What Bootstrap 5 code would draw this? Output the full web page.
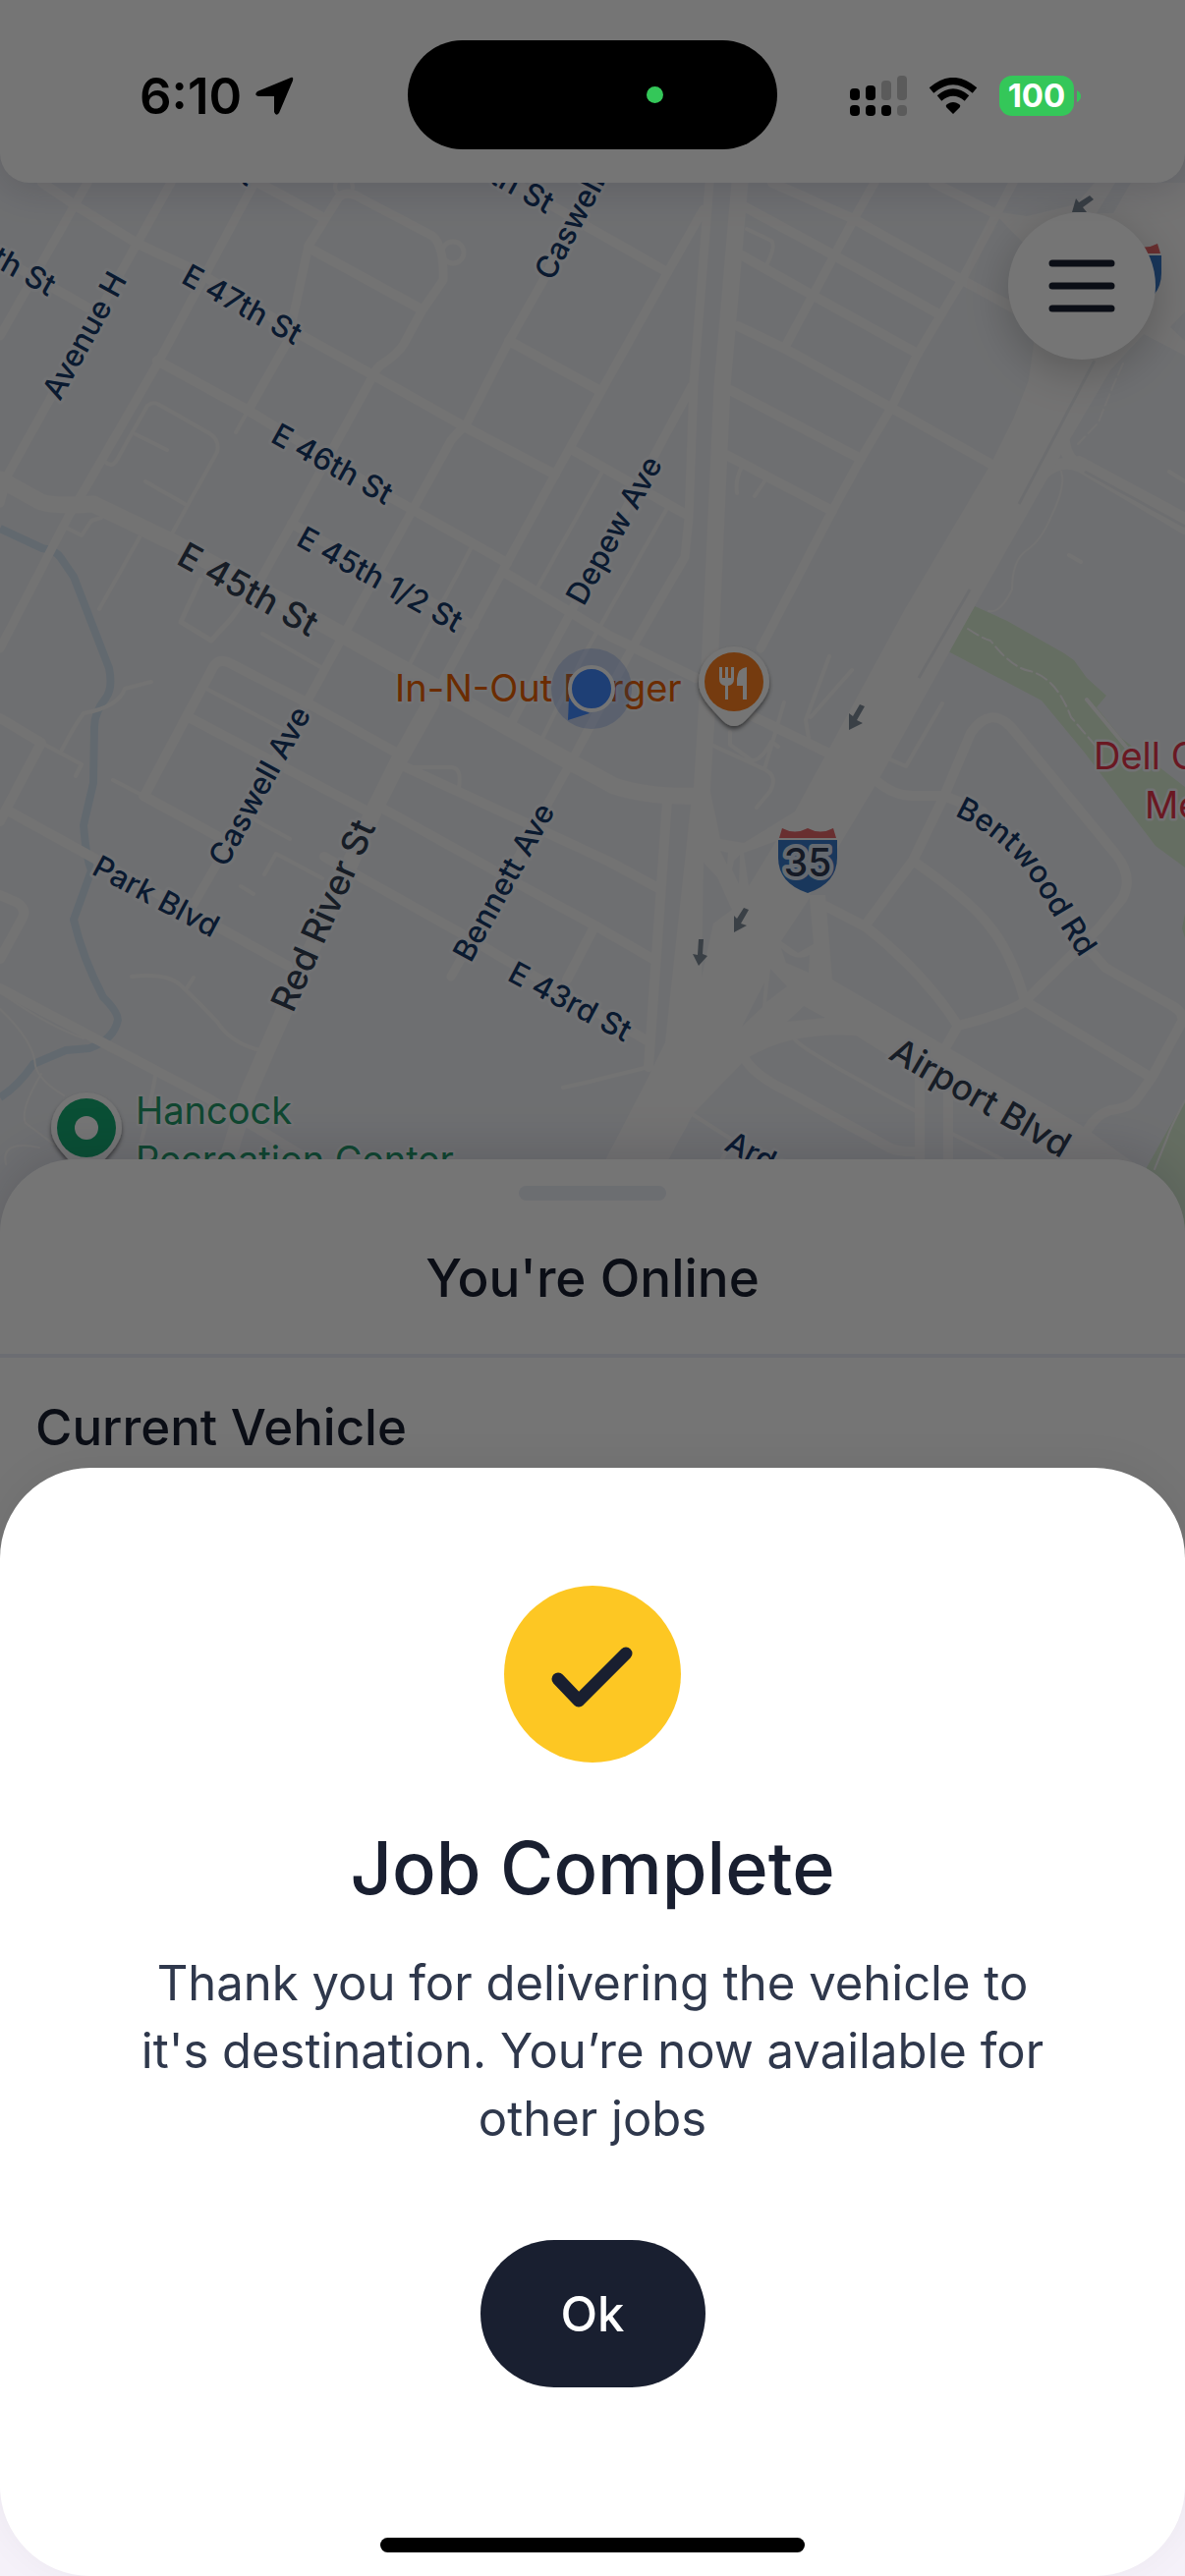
<!DOCTYPE html>
<html lang="en">
<head>
<meta charset="utf-8">
<meta name="viewport" content="width=device-width, initial-scale=1">
<title>Job Complete</title>
<link href="https://cdn.jsdelivr.net/npm/bootstrap@5.3.0/dist/css/bootstrap.min.css" rel="stylesheet">
<style>
  :root { --ink: #191f30; --slate: #2f384c; }
  body { font-family: Inter, "Liberation Sans", sans-serif; background: #f5f1f9; color: var(--ink); }
  .app-header { height: 186px; background: #fff; border-radius: 0 0 30px 30px; box-shadow: 0 6px 40px rgba(20, 20, 60, .16); }
  .status-row { grid-template-columns: minmax(0, 1fr) 376px minmax(0, 1fr); padding-top: 41px; color: #000; }
  .status-side { height: 111px; padding-top: 2px; }
  .status-left { padding-left: 142px; gap: 12px; }
  .status-right { padding-left: 74px; gap: 22px; }
  .clock { font-size: 51px; line-height: 62px; font-weight: 600; }
  .island { height: 111px; border-radius: 56px; background: #000; padding-right: 116px; }
  .cam-dot { width: 17px; height: 17px; background: #34c759; }
  .battery { width: 76px; height: 41px; border-radius: 13px; background: #34c759; color: #fff; font-size: 33px; line-height: 41px; font-weight: 700; }
  .map-area { margin-top: -30px; }
  .map-area > svg { height: 1094px; }
  .menu-btn { top: 60px; right: 30px; width: 150px; height: 150px; background: #fff; box-shadow: 0 12px 45px rgba(0, 0, 0, .22); }
  .scrim { background: rgba(0, 0, 0, .54); }
  .vehicle-sheet { margin-top: -70px; background: #fff; border-radius: 75px 75px 0 0; padding-bottom: 115px; box-shadow: 0 -6px 50px rgba(20, 20, 60, .16); }
  .sheet-top { padding: 27px 0 44px; border-bottom: 4px solid #ebeef8; }
  .grab-bar { width: 150px; height: 15px; background: #ebeff6; }
  .sheet-title { font-size: 53px; line-height: 66px; font-weight: 500; margin: 46px 0 0; }
  .sheet-label { font-size: 51px; line-height: 64px; font-weight: 500; margin: 39px 36px 0; }
  .job-dialog { margin-top: -106px; background: #fff; border-radius: 92px; padding: 120px 120px 24px; box-shadow: 0 -6px 40px rgba(0, 0, 0, .05); }
  .job-dialog h1 { font-size: 74px; line-height: 92px; font-weight: 500; margin: 61px 0 37px; }
  .job-dialog p { font-size: 49px; line-height: 69px; color: var(--slate); margin: 0 0 89px; }
  .tick-disc { width: 180px; height: 180px; padding-top: 8px; background: #fdc723; }
  .ok-btn { width: 229px; height: 150px; padding-top: 8px; background: var(--ink); color: #fff; font-size: 49px; font-weight: 500; }
  .ok-btn:hover { background: var(--ink); color: #fff; }
  .home-bar { width: 432px; height: 15px; background: #000; }
  .rd { fill: none; stroke: #fbfafa; stroke-linejoin: round; stroke-linecap: round; }
  .lbl { font-size: 31px; font-weight: 500; fill: #16396a; paint-order: stroke; stroke: #f7f9fc; stroke-width: 6px; stroke-linejoin: round; }
  .lbl-main { font-size: 36px; fill: #323f53; }
  .poi { font-size: 38px; font-weight: 400; paint-order: stroke; stroke: #f7f9fc; stroke-width: 5px; stroke-linejoin: round; }
</style>
</head>
<body>
<div class="d-flex flex-column min-vh-100 overflow-hidden">
  <div class="position-relative">
    <header class="app-header position-relative">
      <div class="status-row d-grid position-relative z-3">
        <div class="status-side status-left d-flex align-items-center">
          <span class="clock">6:10</span>
          <svg width="42" height="42" viewBox="0 0 42 42" aria-hidden="true"><path d="M38 2Q41 1 40 5L26 38Q23 42 21 37V21H5Q0 20 4 16Z"/></svg>
        </div>
        <div class="island d-flex align-items-center justify-content-end"><span class="cam-dot rounded-circle"></span></div>
        <div class="status-side status-right d-flex align-items-center">
          <svg width="58" height="42" viewBox="0 0 58 42" aria-hidden="true">
            <g><rect x="0" y="13" width="10" height="12" rx="4"/><rect x="16" y="10" width="10" height="15" rx="4"/><rect x="0" y="30" width="10" height="11" rx="4"/><rect x="16" y="30" width="10" height="11" rx="4"/><rect x="32" y="30" width="10" height="11" rx="4"/></g>
            <g fill="#5b5b5b"><rect x="32" y="5" width="10" height="20" rx="4"/><rect x="48" y="0" width="10" height="25" rx="4"/><rect x="48" y="30" width="10" height="11" rx="4"/></g>
          </svg>
          <svg width="50" height="38" viewBox="0 0 50 38" aria-hidden="true"><path d="M25 37L18 30Q17 28 19 27Q25 23 31 27Q33 28 32 30Z"/><path d="M11 21Q25 9 39 21M3 13Q25-6 47 13" fill="none" stroke="#000" stroke-width="7"/></svg>
          <span class="d-flex align-items-center">
            <span class="battery text-center">100</span>
            <svg width="8" height="14" viewBox="0 0 8 14" aria-hidden="true"><path d="M3 1Q7 3 7 7T3 13Z" fill="#34c759"/></svg>
          </span>
        </div>
      </div>
    </header>

    <main class="map-area position-relative z-n1">
      <svg class="w-100 d-block" viewBox="0 156 1206 1094" preserveAspectRatio="xMidYMid slice" role="img" aria-label="Map">
        <rect y="156" width="1206" height="1094" fill="#f0f2f6"/>
        <!-- parkland -->
        <g fill="#dcefd5"><path d="M992 617L1025 632L1083 665L1093 672L1106 690L1126 708L1116 720L1141 751L1206 801V883L1176 861L1103 765L1060 713L965 663Z"/><path d="M1206 1119L1166 1190L1180 1250H1206ZM1206 930L1203 945L1206 955Z"/></g>
        <!-- creek -->
        <path d="M0 538L43 558Q57 560 62 568L75 587L111 680Q115 700 108 710Q96 725 96 740L95 797L85 840Q88 875 93 886L75 936Q84 975 105 1015Q120 1030 120 1038Q116 1058 91 1067L67 1069L34 1083Q18 1106 0 1117" fill="none" stroke="#d6e5f2" stroke-width="8"/>
        <!-- footpaths and service roads -->
        <g class="rd" stroke-width="4">
          <path d="M107 470Q114 477 119 468L150 413Q156 408 162 412L213 441Q224 448 221 460L174 545M138 442L170 458M148 490L188 513M142 547L101 620M67 537L83 545L93 530L103 527M253 417L240 440"/>
          <path d="M267 645L328 680M210 701L293 745M257 833L295 854M245 902L258 910M269 890L281 869L328 894M134 994Q170 990 184 1003T221 1040Q235 1062 265 1069M190 1006L197 995M154 694L127 701Q120 720 85 726Q75 740 63 763M42 756L83 778L77 790M115 794L146 810M413 781H460Q470 782 467 801"/>
          <path d="M158 1095Q152 1130 144 1161M482 553L415 680M613 480L546 600M679 517L593 669L552 751M760 233L785 245Q790 250 780 270M755 475Q748 488 750 502M780 487L768 505"/>
          <path d="M724 758L778 783L798 715M743 745V758L765 774Q775 774 785 755L792 760M844 668L820 733L823 751M867 682L825 730M778 783Q792 790 784 805L770 822M904 772L922 780L959 716M1106 712L1150 765M1088 565L1100 572M1190 480L1206 490"/>
          <path d="M809 1058Q815 1068 932 1131M969 1154L1020 1180M706 1135L745 1160L730 1190M600 1101L660 1086M600 1101L573 1107"/>
          <path d="M0 1010Q50 1045 85 1057M0 1027Q35 1060 36 1085Q40 1100 65 1115M42 1093Q20 1130 26 1143L55 1165M6 1185Q0 1160 40 1168M1206 1120Q1190 1150 1188 1158L1175 1190M1080 480Q1085 495 1070 525Q1060 550 1045 560T1030 600Q1018 625 1006 622" stroke-width="2"/>
          <path d="M1143 370Q1125 410 1118 430L1097 452M985 640Q1000 650 1008 652Q1030 680 1048 683Q1075 690 1090 730L1120 765" stroke-width="2" stroke-dasharray="12 5"/>
        </g>
        <!-- residential streets, south-west to north-east -->
        <g class="rd" stroke-width="9">
          <path d="M0 342L89 186M0 512L8 483L174 186M0 660L71 523L81 507L162 367L259 186M253 417L293 347L314 250L344 202Q350 194 362 199L440 240Q452 250 451 285L429 317L411 350Q405 360 390 370Q383 374 380 382L326 480L297 533L265 590"/>
          <path d="M265 590L235 630L215 652L184 633L204 590" stroke-width="5"/>
          <circle cx="461" cy="257" r="11" stroke-width="5"/><circle cx="350" cy="190" r="9" stroke-width="4"/>
          <path d="M605 180L552 287L518 347L474 433Q460 445 457 452L421 517L346 653L312 715L221 879L196 922"/>
          <path d="M716 213L679 278L612 398L565 483L516 573L439 715M704 393L664 467L581 623L522 733M722 186L706 390L701 527L697 567L643 660L581 776L459 994"/>
          <path d="M890 186L869 223L799 353M1031 186L979 285L934 360L907 415L876 467L847 520L774 660"/>
        </g>
        <!-- residential streets, north-west to south-east -->
        <g class="rd" stroke-width="10">
          <path d="M43 186L75 208L140 248L198 275L308 342L380 382L474 435L565 483M0 262L89 313M160 367L253 418L399 507L516 573M514 583L620 647L708 690M263 186L326 220M314 252L429 315M518 347L611 398M581 457L697 523M530 190L600 232L679 277M297 533L482 637"/>
          <path d="M786 186L869 223L979 285L1040 318M950 186L1014 218M757 210L849 260L956 320M755 260L826 300L934 360M751 332L799 355L907 415L1008 472M743 397L876 467M739 463L847 520M766 729L844 767"/>
          <path d="M148 808L190 729L217 679Q222 670 232 674L312 715L405 767M190 729L376 827M146 810L221 851M411 780L620 877L670 904M388 822L530 901L609 944L666 977M330 872L471 951L518 979L660 1060M0 731L42 756L6 824L0 836M6 824L93 872L293 983M0 1006L214 1119L310 1178M0 911L18 919Q28 926 22 936L0 976M603 947L577 997M679 815L660 1086"/>
        </g>
        <!-- neighbourhood loop east of the highway -->
        <g class="rd" stroke-width="10">
          <path d="M892 795Q910 810 929 810H961L1000 826M882 940L929 876L961 810L988 746Q1008 718 1029 740L1136 870Q1154 893 1142 915L1118 945L1043 1019Q1030 1030 975 1044L963 1065M929 876Q985 915 1005 940Q1030 970 1043 1019L1172 1097L1203 1040Q1206 1030 1190 1022L1125 985L1103 960M1172 1097L1157 1118Q1150 1128 1130 1130Q1115 1135 1106 1151M840 922L882 944Q940 990 975 1044"/>
          <path d="M758 1078Q770 1096 800 1110L905 1168Q915 1173 936 1172M936 1095V1190M965 1110V1190"/>
          <path d="M1083 450Q1085 468 1100 475L1206 538M1062 482Q1080 466 1100 475" stroke-width="12"/>
          <path d="M1098 470L1206 528" stroke-width="12"/>
        </g>
        <path d="M1104 480L1206 536" stroke="#eef0f3" stroke-width="3"/>
        <!-- arterial roads -->
        <path class="rd" stroke-width="17" d="M0 488L40 510Q52 516 95 513L178 553L332 637L581 776L625 800Q660 812 714 810M439 715L407 772L380 826L289 1029L253 1111L225 1200M753 186L735 393L722 680L714 810"/>
        <!-- interstate, ramps and Airport Blvd -->
        <path fill="#fbfafa" d="M1114 186L1095 208L1045 220L1010 215L1041 247L1052 350L1047 387L1031 427L1008 473L921 620L809 826L757 858L733 854L722 801L704 811L677 1061L656 1104L617 1179L590 1250H650L681 1179L706 1133L758 1079Q800 1050 871 1054L929 1090L1075 1179L1120 1215H1190L1153 1183L1103 1147L847 997L840 911H824L894 794L992 617L1083 457L1130 377L1164 340L1206 362V186Z"/>
        <g fill="#f0f2f6">
          <path d="M1135 186H1151L1133 217H1116ZM1191 333L1206 317V347Z"/>
          <path d="M724 801Q750 805 766 822T780 844L757 856L733 852Z"/>
          <path d="M733 866L741 868L740 880ZM757 868L790 856L762 902ZM747 876L745 885L752 900L753 870ZM716 878L730 893L745 926L726 940L714 995Z"/>
          <path d="M824 914L828 961L812 970L795 958ZM795 965Q810 980 824 972L823 990L800 980ZM784 986L801 1004L780 1020ZM778 1000L776 1025L755 1045ZM818 1024L840 1036L801 1040Z"/>
        </g>
        <path d="M1114 367L1037 513M987 600L935 690" stroke="#eceef1" stroke-width="3"/>
        <!-- one-way arrows -->
        <g fill="#7e8b98">
          <path d="M875 717L880 719L872 733L878 736L864 743V726L868 729Z"/>
          <path d="M757 924L762 926L754 940L760 942L747 949V932L750 935Z"/>
          <path d="M711 956H716L715 971L720 973L711 983L705 971L710 972Z"/>
          <path d="M1109 199L1113 203L1102 211L1106 216H1091L1095 202L1098 206Z"/>
        </g>
        <!-- street names -->
        <g class="lbl">
          <text transform="translate(183 287) rotate(29)">E 47th St</text>
          <text transform="translate(274 449) rotate(29)">E 46th St</text>
          <text transform="translate(300 554) rotate(29)">E 45th 1/2 St</text>
          <text transform="translate(515 997) rotate(28)">E 43rd St</text>
          <text transform="translate(92 889) rotate(28)">Park Blvd</text>
          <text transform="translate(61 409) rotate(-61)">Avenue H</text>
          <text transform="translate(594 618) rotate(-61)">Depew Ave</text>
          <text transform="translate(562 287) rotate(-62)">Caswell</text>
          <text transform="translate(230 884) rotate(-61)">Caswell Ave</text>
          <text transform="translate(479 981) rotate(-61)">Bennett Ave</text>
          <text transform="translate(556 218) rotate(29)" text-anchor="end">th St</text>
          <text transform="translate(49 302) rotate(29)" text-anchor="end">th St</text>
          <text transform="translate(252 190) rotate(29)" text-anchor="end">St</text>
          <text transform="translate(736 1170) rotate(27)">Arde</text>
          <path id="bentwood" d="M971 830Q1028 856 1058 908T1120 1005" fill="none" stroke="none"/>
          <text><textPath href="#bentwood">Bentwood Rd</textPath></text>
          <text class="lbl-main" transform="translate(178 573) rotate(29)">E 45th St</text>
          <text class="lbl-main" transform="translate(298 1032) rotate(-66)">Red River St</text>
          <text class="lbl-main" transform="translate(903 1077) rotate(30)">Airport Blvd</text>
        </g>
        <!-- interstate shields -->
        <defs>
          <g id="shield"><path d="M-29 10L-26 0Q-13 7 0 0Q13 7 26 0L29 10Z" fill="#e56769"/><path d="M-30 12H30V30Q30 56 0 66Q-30 56-30 30Z" fill="#3878c8"/></g>
        </defs>
        <use href="#shield" x="822" y="843"/>
        <text x="822" y="892" text-anchor="middle" font-size="39" font-weight="500" fill="#2f3a52" stroke="#dde6f5" stroke-width="8" stroke-linejoin="round" paint-order="stroke">35</text>
        <use href="#shield" x="1152" y="248"/>
        <!-- places -->
        <g class="poi">
          <text x="402" y="714" fill="#e96000">In-N-Out Burger</text>
          <text x="138" y="1144" fill="#239a6a">Hancock</text>
          <text x="138" y="1194" fill="#239a6a">Recreation Center</text>
          <text x="1113" y="783" fill="#e8364a">Dell C</text>
          <text x="1165" y="833" fill="#e8364a">Me</text>
        </g>
        <defs><filter id="pinshade" x="-30%" y="-30%" width="160%" height="170%"><feDropShadow dx="0" dy="3" stdDeviation="2" flood-opacity=".5"/></filter></defs>
        <g transform="translate(747 694)">
          <path d="M0-36A36 36 0 0 1 36 0C36 14 26 24 12 39Q0 51-12 39C-26 24-36 14-36 0A36 36 0 0 1 0-36Z" fill="#fff" filter="url(#pinshade)"/>
          <circle r="30" fill="#ff8221"/>
          <path d="M-15-15H-12V-4H-9V-15H-6V-4H-3V-15H0V-3Q0 3-6 4V18H-9V4Q-15 3-15-3ZM13-15V18H9V4H3V-3Q4-14 13-15Z" fill="#fff"/>
        </g>
        <g transform="translate(88 1148)">
          <path d="M0-36A36 36 0 0 1 36 0C36 14 26 24 12 39Q0 51-12 39C-26 24-36 14-36 0A36 36 0 0 1 0-36Z" fill="#fff" filter="url(#pinshade)"/>
          <circle r="30" fill="#16ac73"/><circle r="12" fill="#fff"/>
        </g>
        <!-- driver position -->
        <circle cx="602" cy="701" r="41" fill="#4a7de0" fill-opacity=".25"/>
        <path d="M578 733L579 710L600 726Z" fill="#4389ff"/>
        <circle cx="602" cy="701" r="22" fill="#4389ff" stroke="#fff" stroke-width="4"/>
      </svg>
      <button type="button" class="menu-btn btn rounded-circle position-absolute p-0 d-flex align-items-center justify-content-center" aria-label="Menu">
        <svg width="68" height="54" viewBox="0 0 68 54" aria-hidden="true"><path d="M4 4H64M4 27H64M4 50H64" stroke="#191f30" stroke-width="7" stroke-linecap="round"/></svg>
      </button>
    </main>

    <section class="vehicle-sheet position-relative">
      <div class="sheet-top d-flex flex-column align-items-center">
        <span class="grab-bar rounded-pill"></span>
        <h2 class="sheet-title">You're Online</h2>
      </div>
      <h3 class="sheet-label">Current Vehicle</h3>
    </section>
    <div class="scrim position-absolute top-0 start-0 w-100 h-100 z-1"></div>
  </div>

  <section class="job-dialog position-relative z-2 flex-grow-1 d-flex flex-column align-items-center text-center" role="dialog" aria-labelledby="job-title">
    <div class="tick-disc rounded-circle d-flex align-items-center justify-content-center">
      <svg width="84" height="64" viewBox="0 0 84 64" aria-hidden="true"><path d="M7 33L28 55L76 7" fill="none" stroke="#191f30" stroke-width="13" stroke-linecap="round" stroke-linejoin="round"/></svg>
    </div>
    <h1 id="job-title">Job Complete</h1>
    <p>Thank you for delivering the vehicle to it's destination. You’re now available for other jobs</p>
    <button type="button" class="ok-btn btn rounded-pill">Ok</button>
    <span class="home-bar rounded-pill mt-auto"></span>
  </section>
</div>
<script src="https://cdn.jsdelivr.net/npm/bootstrap@5.3.0/dist/js/bootstrap.bundle.min.js"></script>
</body>
</html>
